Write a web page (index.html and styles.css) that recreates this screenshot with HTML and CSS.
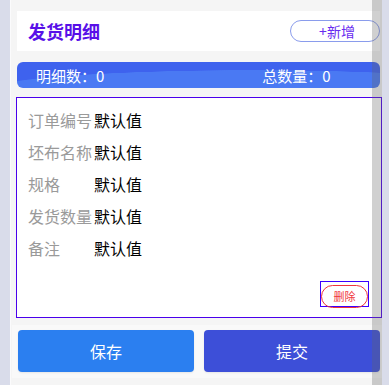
FILE: index.html
```html
<!DOCTYPE html>
<html lang="zh">
<head>
<meta charset="utf-8">
<link rel="stylesheet" href="styles.css">
</head>
<body>
<div class="page">
  <div class="header">
    <div class="title">发货明细</div>
    <div class="add-btn">+新增</div>
  </div>
  <div class="stats">
    <span class="stat">明细数：0</span>
    <span class="stat stat-right">总数量：0</span>
  </div>
  <div class="card">
    <div class="row"><span class="label">订单编号</span><span class="value">默认值</span></div>
    <div class="row"><span class="label">坯布名称</span><span class="value">默认值</span></div>
    <div class="row"><span class="label">规格</span><span class="value">默认值</span></div>
    <div class="row"><span class="label">发货数量</span><span class="value">默认值</span></div>
    <div class="row"><span class="label">备注</span><span class="value">默认值</span></div>
    <div class="card-foot">
      <div class="del-wrap"><div class="del-btn">删除</div></div>
    </div>
  </div>
  <div class="bottom">
    <div class="btn btn-save">保存</div>
    <div class="btn btn-submit">提交</div>
  </div>
  <div class="scrollbar"></div>
</div>
</body>
</html>
```

FILE: styles.css
```css
html, body {
  margin: 0;
  padding: 0;
}
body {
  background: #d9dcea;
  font-family: "Noto Sans CJK SC", "Noto Sans", sans-serif;
  height: 385px;
  overflow: hidden;
}
.page {
  position: relative;
  margin-left: 10px;
  width: 372px;
  height: 385px;
  background: #f5f5f5;
  border-left: 1px solid #fbfbfc;
  padding-top: 11px;
  box-sizing: border-box;
}
.header {
  margin-left: 6px;
  width: 363px;
  height: 40px;
  background: #fff;
  display: flex;
  align-items: center;
  justify-content: space-between;
  box-sizing: border-box;
  padding-left: 11px;
}
.title {
  font-size: 18px;
  font-weight: bold;
  color: #5810e8;
}
.add-btn {
  width: 90px;
  height: 22px;
  box-sizing: border-box;
  border: 1px solid #8a9cec;
  border-radius: 11px;
  color: #6a2cf0;
  font-size: 14px;
  line-height: 20px;
  text-align: center;
  padding-left: 4px;
}
.stats {
  margin: 11px 0 0 6px;
  width: 363px;
  height: 26px;
  border-radius: 6px;
  background:
    radial-gradient(ellipse 270px 21px at 235px 29px, #4a79f3 98%, transparent 100%),
    #3e62ee;
  display: flex;
  align-items: center;
  color: #fff;
  font-size: 15px;
  box-sizing: border-box;
  padding-left: 19px;
}
.stat-right {
  margin-left: 158px;
}
.card {
  margin: 9px 0 0 5px;
  width: 366px;
  height: 221px;
  box-sizing: border-box;
  border: 1px solid #4a00ec;
  background: #fff;
  padding: 6px 0 0 11px;
}
.row {
  display: flex;
  height: 32px;
  line-height: 32px;
  font-size: 16px;
}
.label {
  width: 66px;
  color: #9a9a9a;
  white-space: nowrap;
}
.value {
  color: #000;
}
.card-foot {
  display: flex;
  justify-content: flex-end;
  padding-right: 12px;
  margin-top: 17px;
}
.del-wrap {
  width: 49px;
  height: 26px;
  box-sizing: border-box;
  border: 1px solid #3b00ff;
}
.del-btn {
  margin-top: 3px;
  height: 23px;
  box-sizing: border-box;
  border: 1px solid #f0343c;
  border-radius: 12px;
  color: #f0343c;
  font-size: 11px;
  line-height: 21px;
  text-align: center;
}
.bottom {
  margin-top: 7px;
  margin-left: 1px;
  height: 53px;
  background: #f9f9f9;
  display: flex;
  gap: 10px;
  padding: 5px 0 0 6px;
  box-sizing: border-box;
}
.btn {
  width: 176px;
  height: 42px;
  border-radius: 4px;
  color: #fff;
  font-size: 16px;
  line-height: 42px;
  text-align: center;
  box-shadow: 0 1px 2px rgba(0,0,0,0.08);
}
.btn-save {
  background: #2b7ff0;
}
.btn-submit {
  background: #3d4fd8;
}
.scrollbar {
  position: absolute;
  top: 0;
  right: 0;
  width: 10px;
  height: 385px;
  background: rgba(100, 100, 100, 0.3);
}
```
